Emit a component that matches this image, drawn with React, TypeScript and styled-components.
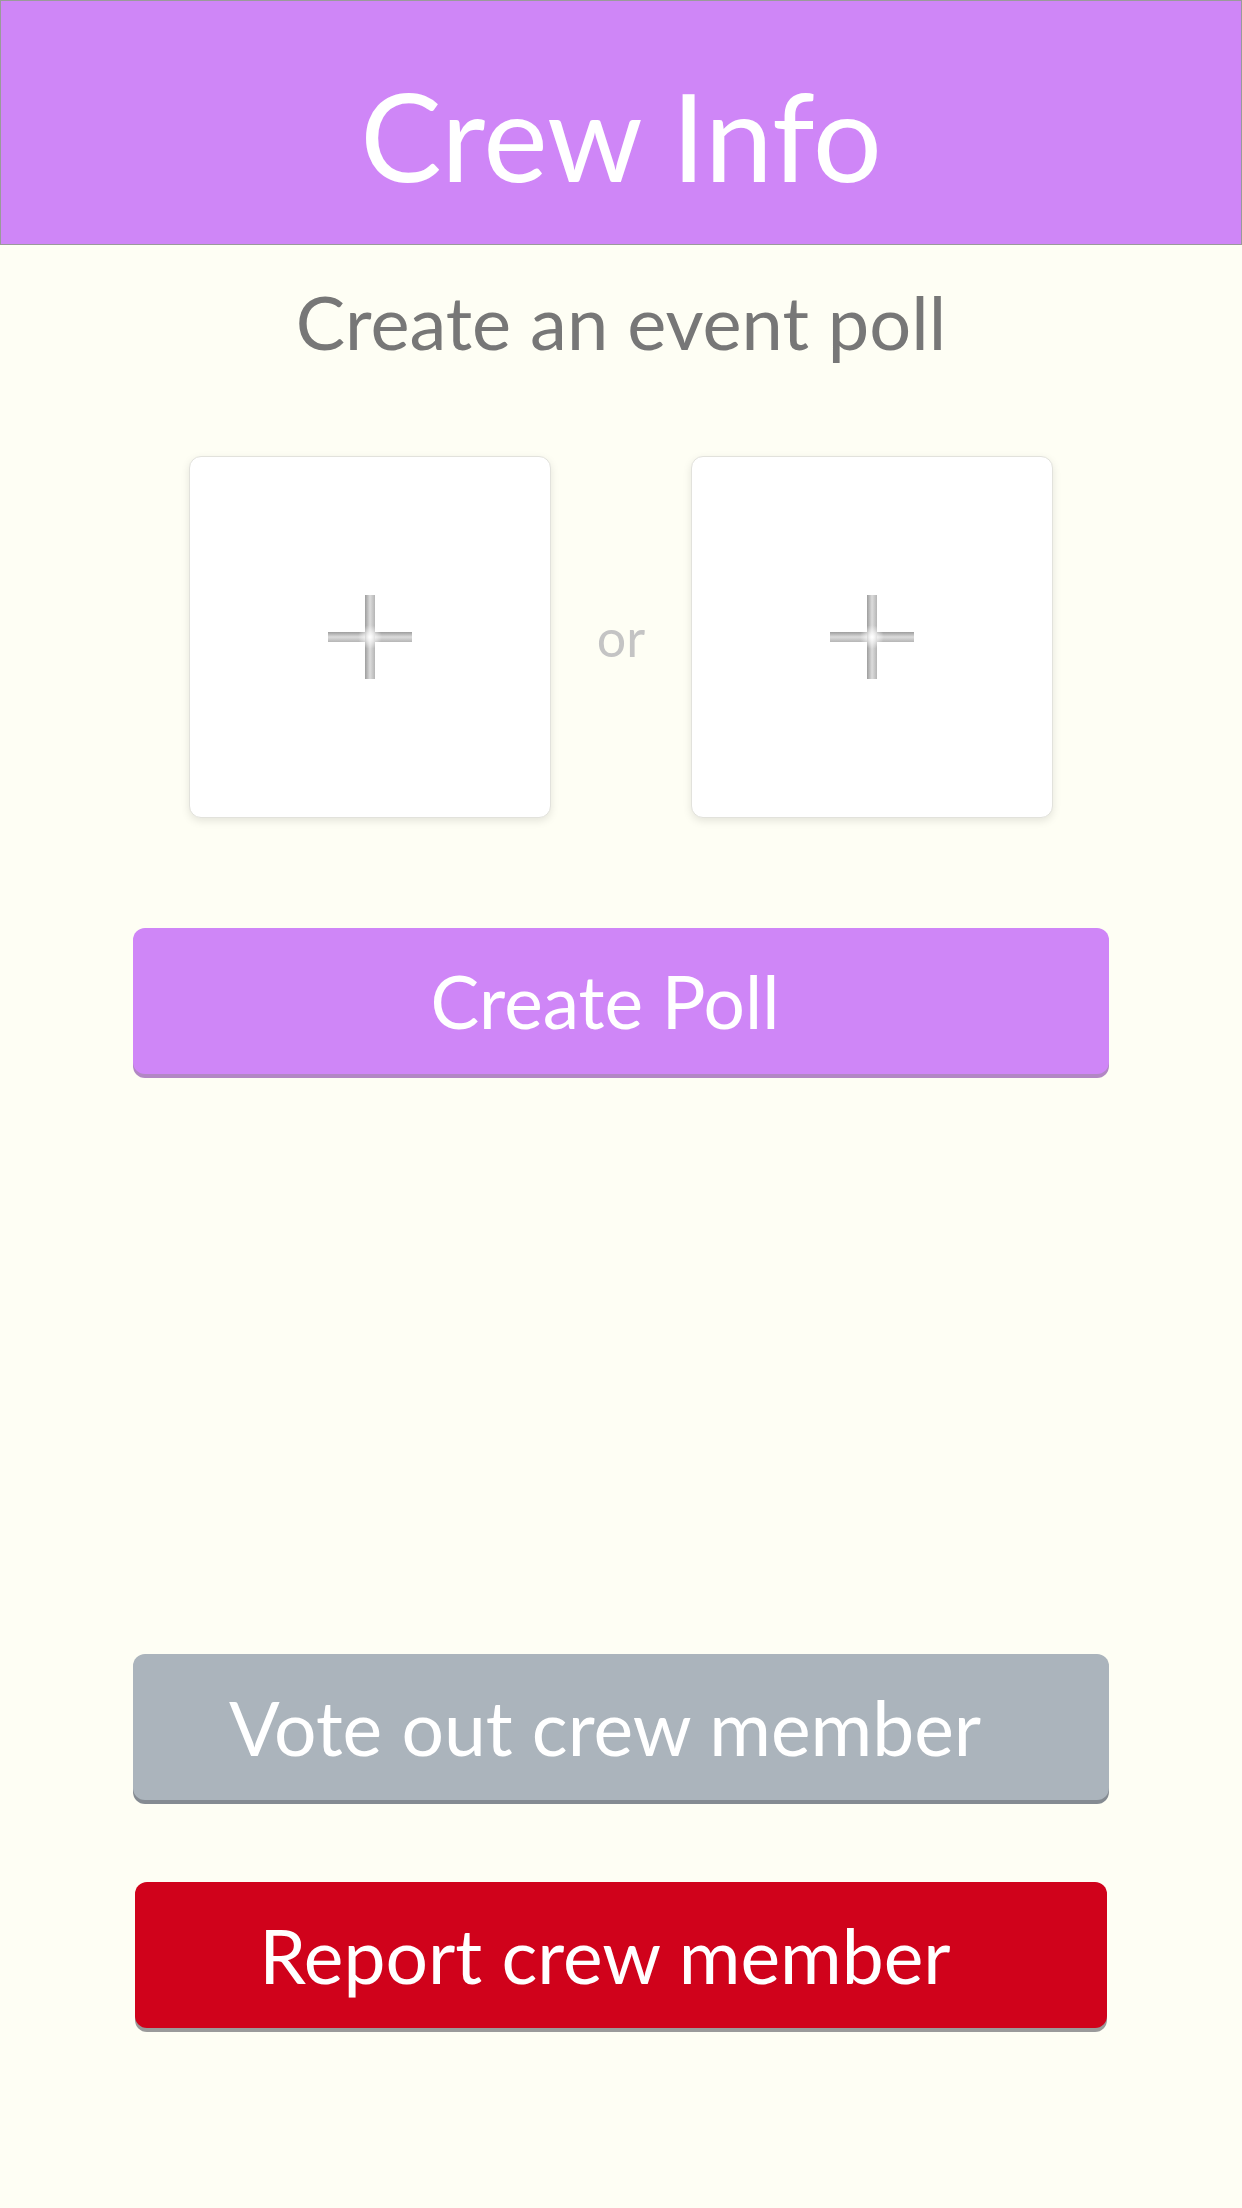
import React from "react";
import styled, { createGlobalStyle } from "styled-components";

const Global = createGlobalStyle`
  html, body { margin: 0; padding: 0; background: #fefef4; }
  body { font-family: Lato, "Noto Sans", sans-serif; }
  * { box-sizing: border-box; }
`;

const Page = styled.div`
  width: 1242px;
  min-height: 2208px;
  background: #fefef4;
  display: flex;
  flex-direction: column;
  align-items: center;
`;

const Header = styled.header`
  width: 100%;
  height: 245px;
  background: #cf86f7;
  border: 1px solid #9a9a9a;
  display: flex;
  align-items: center;
  justify-content: center;
  padding-top: 26px;
`;

const Title = styled.h1`
  margin: 0;
  font-family: Lato, sans-serif;
  font-weight: 400;
  font-size: 122px;
  line-height: 1.2;
  color: #ffffff;
`;

const Subtitle = styled.h2`
  margin: 33px 0 0;
  font-family: Lato, sans-serif;
  font-weight: 400;
  font-size: 74px;
  line-height: 1.2;
  color: #777777;
`;

const CardRow = styled.div`
  margin-top: 89px;
  display: flex;
  align-items: center;
`;

const Card = styled.button`
  width: 362px;
  height: 362px;
  background: #ffffff;
  border: 1px solid #e2e2dc;
  border-radius: 12px;
  box-shadow: 0 3px 8px rgba(0, 0, 0, 0.1);
  display: flex;
  align-items: center;
  justify-content: center;
  padding: 0;
  cursor: pointer;
`;

const Or = styled.span`
  width: 140px;
  text-align: center;
  font-family: Lato, sans-serif;
  font-size: 52px;
  color: #c4c4c4;
  line-height: 1;
`;

const ActionButton = styled.button<{ $bg: string; $edge: string; $mt: number; $w?: number; $fs?: number }>`
  margin-top: ${(p) => p.$mt}px;
  width: ${(p) => p.$w ?? 976}px;
  height: 146px;
  border: none;
  border-radius: 12px;
  background: ${(p) => p.$bg};
  box-shadow: 0 4px 0 ${(p) => p.$edge};
  color: #ffffff;
  font-family: Lato, sans-serif;
  font-weight: 400;
  font-size: ${(p) => p.$fs ?? 74}px;
  padding: 0 32px 0 0;
  display: flex;
  align-items: center;
  justify-content: center;
  cursor: pointer;
`;

const Plus = () => (
  <svg width="84" height="84" viewBox="0 0 84 84">
    <defs>
      <linearGradient id="gh" x1="0" y1="0" x2="0" y2="1">
        <stop offset="0" stopColor="#9d9d9d" />
        <stop offset="0.5" stopColor="#dcdcdc" />
        <stop offset="1" stopColor="#b5b5b5" />
      </linearGradient>
      <linearGradient id="gv" x1="0" y1="0" x2="1" y2="0">
        <stop offset="0" stopColor="#9d9d9d" />
        <stop offset="0.5" stopColor="#dcdcdc" />
        <stop offset="1" stopColor="#b5b5b5" />
      </linearGradient>
      <radialGradient id="glow" cx="0.5" cy="0.5" r="0.5">
        <stop offset="0" stopColor="#ffffff" stopOpacity="1" />
        <stop offset="1" stopColor="#ffffff" stopOpacity="0" />
      </radialGradient>
    </defs>
    <rect x="0" y="37" width="84" height="10" fill="url(#gh)" />
    <rect x="37" y="0" width="10" height="84" fill="url(#gv)" />
    <circle cx="42" cy="42" r="12" fill="url(#glow)" />
  </svg>
);

export default function App() {
  return (
    <Page>
      <Global />
      <Header>
        <Title>Crew Info</Title>
      </Header>
      <Subtitle>Create an event poll</Subtitle>
      <CardRow>
        <Card aria-label="Add first option">
          <Plus />
        </Card>
        <Or>or</Or>
        <Card aria-label="Add second option">
          <Plus />
        </Card>
      </CardRow>
      <ActionButton $bg="#cf86f7" $edge="#b287c4" $mt={110} $fs={73}>
        Create Poll
      </ActionButton>
      <ActionButton $bg="#abb4bc" $edge="#858b92" $mt={580} $fs={75}>
        Vote out crew member
      </ActionButton>
      <ActionButton $bg="#d0021b" $edge="#9a9a9a" $mt={82} $w={972} $fs={75}>
        Report crew member
      </ActionButton>
    </Page>
  );
}
